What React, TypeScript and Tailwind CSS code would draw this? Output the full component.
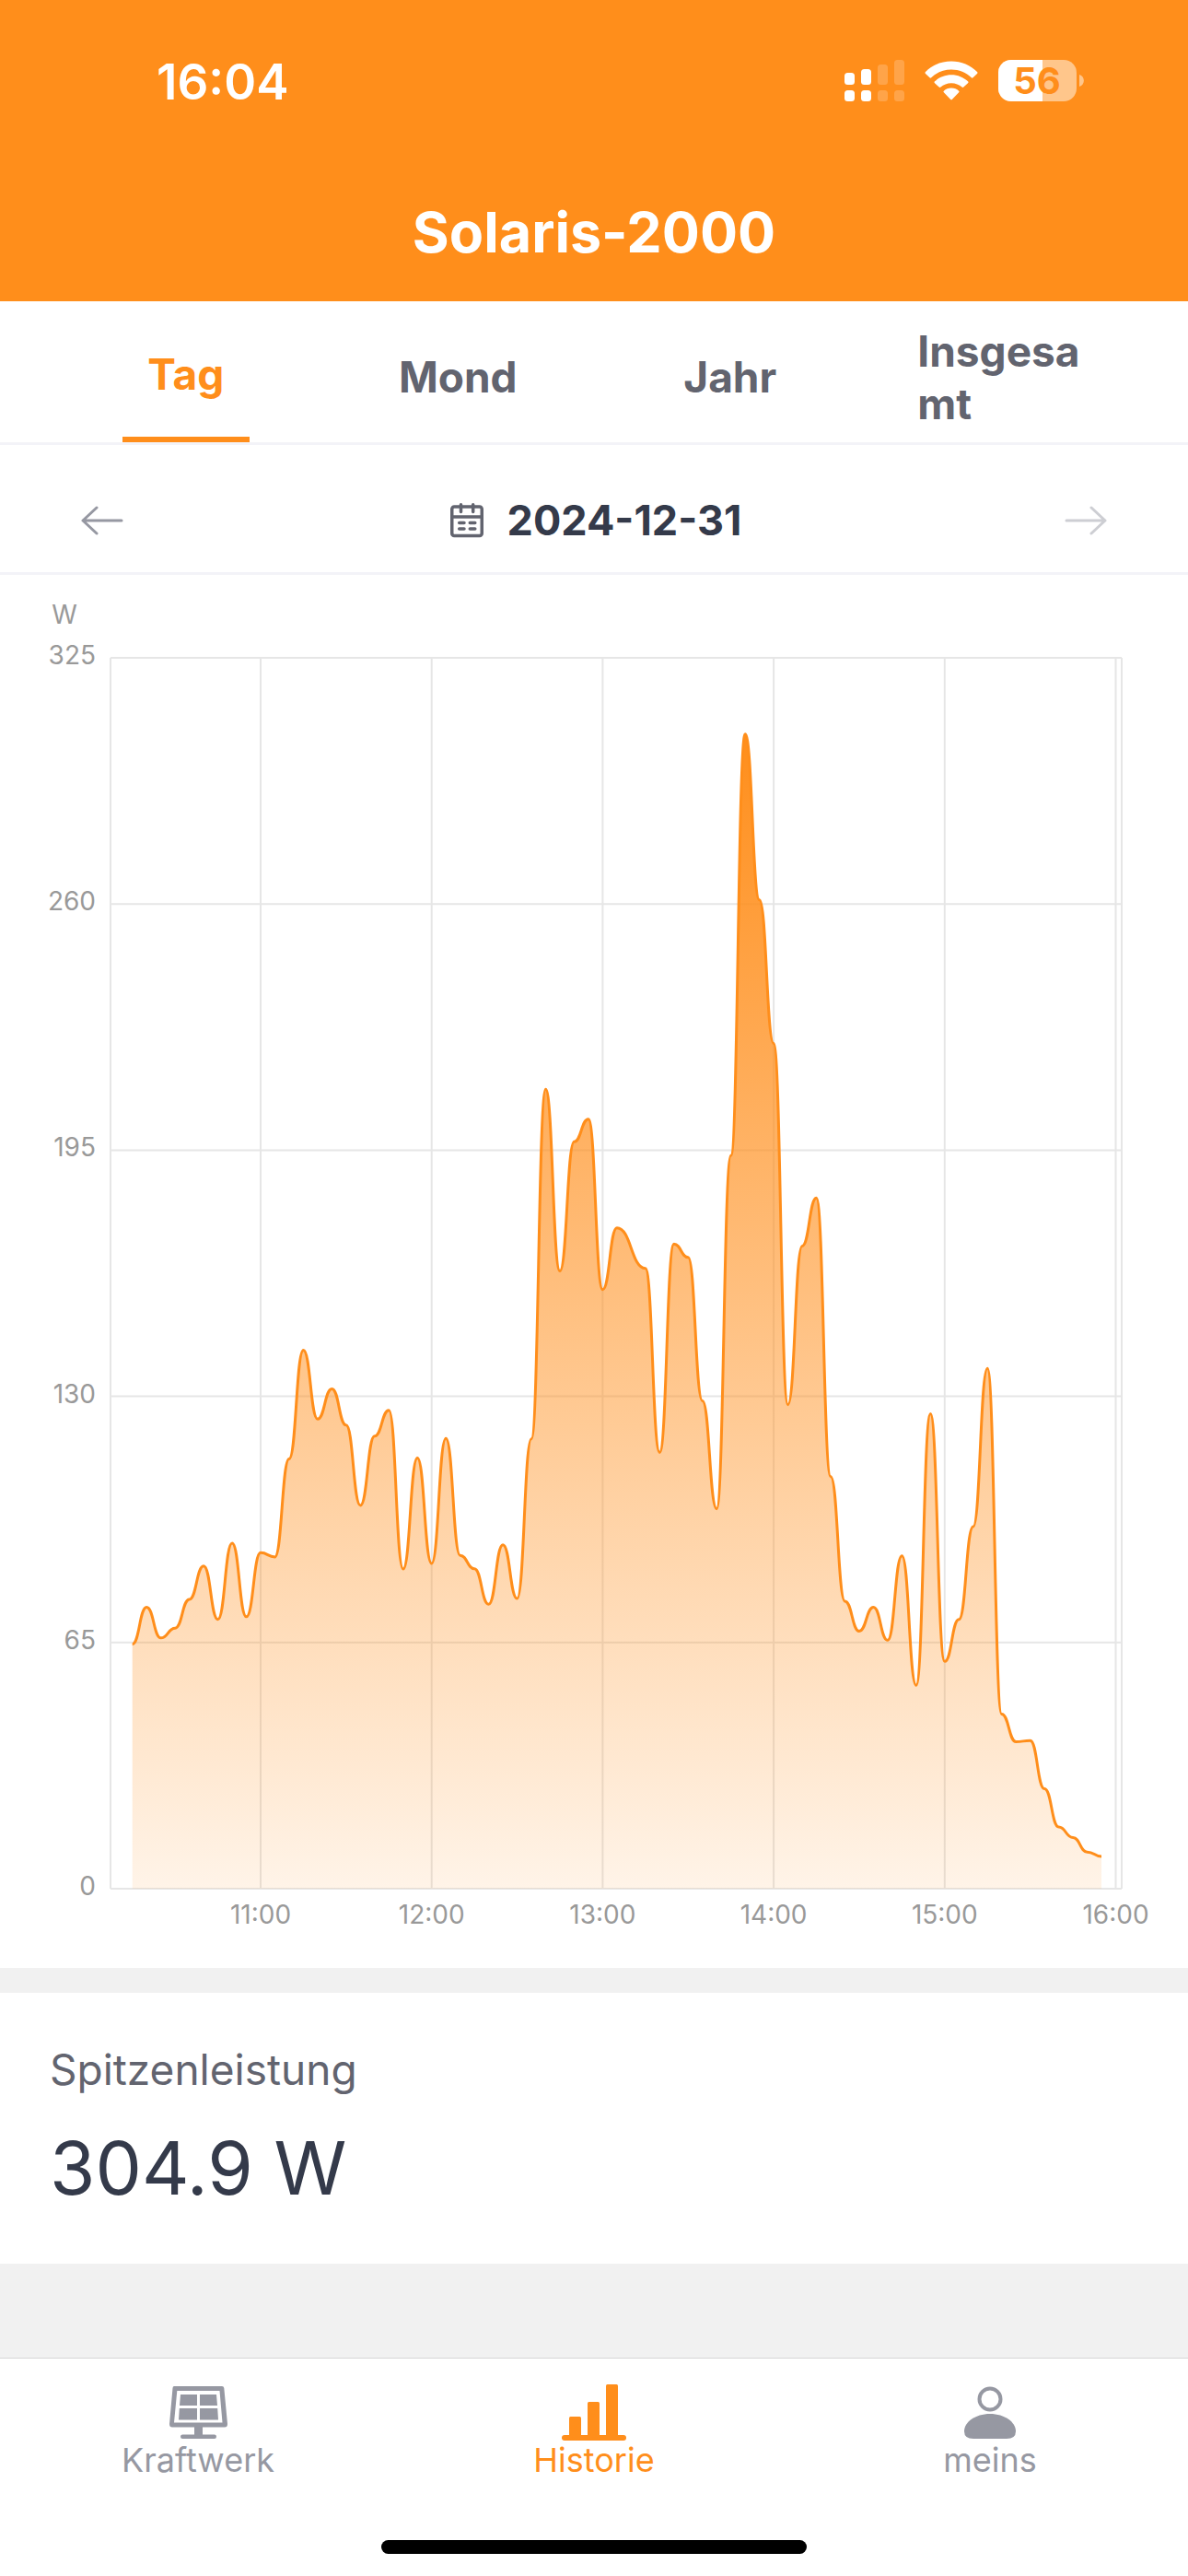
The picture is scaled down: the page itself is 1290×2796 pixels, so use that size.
import { useState } from 'react';

// Power readings in watts, [minutes since midnight, W]
const START = 10 * 60 + 15;
const readings: [number, number][] = [
  64.6, 74.3, 66.2, 68.8, 76.4, 85.2, 71.1, 91.2, 71.8, 88.7, 87.6, 113.5,
  142.2, 124, 132, 122.4, 101.2, 119.5, 126.3, 84.4, 113.7, 85.9, 118.9, 88,
  84.5, 75.1, 90.8, 76.6, 118.8, 211.1, 163.1, 197.2, 203.2, 158.2, 174.5, null,
  163.8, 115.2, 170.2, 166.7, 128.8, 100.3, 193.6, 304.9, 261.1, 223.2, 127.8, 169.7,
  182.4, 108.8, 75.9, 68, 74.3, 65.6, 87.9, 53.7, 125.4, 60, 71.1, 95.6,
  137.4, 46.1, 38.8, 39.1, 26.4, 16.3, 13.5, 9.7, 8.5,
].flatMap((w, i) => (w === null ? [] : [[START + i * 5, w] as [number, number]]));

const plot = { left: 120, right: 1218, top: 90, bottom: 1426 };
const MAX_W = 325;
const hours = [11, 12, 13, 14, 15, 16];
const watts = [0, 65, 130, 195, 260, 325];

const toX = (min: number) => 283 + ((min - 660) / 60) * 185.7;
const toY = (w: number) => plot.bottom - (w / MAX_W) * (plot.bottom - plot.top);

function linePath() {
  return readings
    .map(([min, w], i) => {
      const x = toX(min);
      const y = toY(w);
      if (i === 0) return `M${x} ${y}`;
      const px = toX(readings[i - 1][0]);
      const py = toY(readings[i - 1][1]);
      const mid = (px + x) / 2;
      return `C${mid} ${py} ${mid} ${y} ${x} ${y}`;
    })
    .join('');
}

function PowerChart() {
  const line = linePath();
  const firstX = toX(readings[0][0]);
  const lastX = toX(readings[readings.length - 1][0]);

  return (
    <svg viewBox="0 0 1290 1512" className="block w-full h-auto" role="img" aria-label="Leistung in Watt">
      <defs>
        <linearGradient id="area" x1="0" y1="0" x2="0" y2="1">
          <stop offset="0" stopColor="#ff8e1b" />
          <stop offset="1" stopColor="#ff8e1b" stopOpacity="0.1" />
        </linearGradient>
      </defs>
      <g stroke="#e6e6e6" strokeWidth="2">
        {watts.map(w => (
          <line key={w} x1={plot.left} x2={plot.right} y1={toY(w)} y2={toY(w)} />
        ))}
        {hours.map(h => (
          <line key={h} x1={toX(h * 60)} x2={toX(h * 60)} y1={plot.top} y2={plot.bottom} />
        ))}
        <line x1={plot.left} x2={plot.left} y1={plot.top} y2={plot.bottom} />
        <line x1={plot.right} x2={plot.right} y1={plot.top} y2={plot.bottom} />
      </g>
      <path d={`${line}L${lastX} ${plot.bottom}L${firstX} ${plot.bottom}Z`} fill="url(#area)" />
      <path d={line} fill="none" stroke="#ff8e1b" strokeWidth="3" strokeLinejoin="round" />
      <g className="text-[28px]" fill="#999999">
        <text x="70" y="53" textAnchor="middle">W</text>
        {watts.map(w => (
          <text key={w} x="104" y={toY(w) + 7} textAnchor="end">{w}</text>
        ))}
        {hours.map(h => (
          <text key={h} x={toX(h * 60)} y="1464" textAnchor="middle">{h}:00</text>
        ))}
      </g>
    </svg>
  );
}

function SignalIcon() {
  return (
    <svg width="65" height="45" viewBox="0 0 65 45" fill="white" aria-hidden="true">
      <rect x="0" y="14" width="11" height="13" rx="3.5" />
      <rect x="18" y="10" width="11" height="17" rx="3.5" />
      <rect x="0" y="33" width="11" height="12" rx="3.5" />
      <rect x="18" y="33" width="11" height="12" rx="3.5" />
      <g opacity="0.2">
        <rect x="36" y="5" width="11" height="22" rx="3.5" />
        <rect x="54" y="0" width="11" height="27" rx="3.5" />
        <rect x="36" y="33" width="11" height="12" rx="3.5" />
        <rect x="54" y="33" width="11" height="12" rx="3.5" />
      </g>
    </svg>
  );
}

function WifiIcon() {
  return (
    <svg width="58" height="43" viewBox="0 0 58 43" fill="white" aria-hidden="true">
      <path d="M29 0.5C40 0.5 50 4.800 57 12Q58 13 57 14L52.500 18.300Q51.700 19 50.800 18.200C45 12.700 37.500 9.500 29 9.500S13 12.700 7.200 18.200Q6.300 19 5.500 18.300L1 14Q0 13 1 12C8 4.800 18 0.500 29 0.500Z" />
      <path d="M29 15.200C36 15.200 42.300 17.900 47 22.300Q48 23.200 47 24.200L42.300 28.600Q41.500 29.300 40.600 28.600C37.500 25.800 33.500 24.200 29 24.200S20.500 25.800 17.400 28.600Q16.500 29.300 15.700 28.600L11 24.200Q10 23.200 11 22.300C15.700 17.900 22 15.200 29 15.200Z" />
      <path d="M29 29.500C32.200 29.500 35 30.700 37.200 32.700Q38 33.500 37.200 34.300L30 41.700Q29 42.700 28 41.700L20.800 34.300Q20 33.500 20.800 32.700C23 30.700 25.800 29.500 29 29.500Z" />
    </svg>
  );
}

function BatteryIcon() {
  return (
    <svg width="93" height="45" viewBox="0 0 93 45" className="overflow-visible" role="img" aria-label="Akku 56 %">
      <defs>
        <clipPath id="battery-body">
          <rect width="85" height="45" rx="14" />
        </clipPath>
      </defs>
      <g clipPath="url(#battery-body)">
        <rect width="85" height="45" fill="#ffc68b" />
        <rect width="48" height="45" fill="white" />
      </g>
      <path d="M88 16C94.500 17.500 94.500 27.500 88 29Z" fill="#ffc68b" />
      <text x="42" y="37" textAnchor="middle" fill="#ff8e1b" className="text-[40px] font-bold">56</text>
    </svg>
  );
}

function ArrowIcon() {
  return (
    <svg width="46" height="32" viewBox="0 0 46 32" fill="none" stroke="currentColor" strokeWidth="3" strokeLinecap="round" strokeLinejoin="round" aria-hidden="true">
      <path d="M44 16H2M17 2L2 16L17 30" />
    </svg>
  );
}

function CalendarIcon() {
  return (
    <svg width="36" height="38" viewBox="0 0 36 38" fill="none" stroke="#62646f" strokeWidth="3.5" strokeLinecap="round" aria-hidden="true">
      <rect x="1.750" y="4" width="32.500" height="31.500" rx="2.500" />
      <path d="M2 15H34M11.500 1.800V9.500M24.700 1.800V9.500" />
      <path d="M9.700 21.500H15M21.300 21.500H26.800M9.700 28H15M21.300 28H26.800" />
    </svg>
  );
}

function PlantIcon() {
  return (
    <svg width="63" height="58" viewBox="0 0 63 58" fill="currentColor" aria-hidden="true">
      <path fillRule="evenodd" d="M5 0H57Q59 0 59.300 2L63 41Q63 44.500 60 44.500H3Q0 44.500 0 41L3.500 2Q3.700 0 5 0ZM8.300 5L5 39.500H57.500L54.500 5Z" />
      <path d="M12 9H30V21H11ZM33 9H51L52 21H33ZM10.800 24H30V36.500H10ZM33 24H52.200L53 36.500H33Z" />
      <rect x="27" y="43" width="9" height="11" />
      <rect x="12" y="52.500" width="39" height="4.500" rx="2.250" />
    </svg>
  );
}

function HistoryIcon() {
  return (
    <svg width="70" height="62" viewBox="0 0 70 62" fill="currentColor" aria-hidden="true">
      <rect x="8" y="35" width="13" height="23" rx="1.500" />
      <rect x="28" y="19" width="13" height="39" rx="1.500" />
      <rect x="48" y="0" width="13" height="58" rx="1.500" />
      <rect x="0" y="55" width="70" height="6" rx="3" />
    </svg>
  );
}

function PersonIcon() {
  return (
    <svg width="58" height="58" viewBox="0 0 58 58" fill="currentColor" aria-hidden="true">
      <circle cx="29" cy="14" r="11.500" fill="none" stroke="currentColor" strokeWidth="4" />
      <path d="M29 30C45 30 57 39 57 49Q57 57 47 57H11Q1 57 1 49C1 39 13 30 29 30Z" />
    </svg>
  );
}

const tabs = ['Tag', 'Mond', 'Jahr', 'Insgesamt'];

const navItems = [
  { label: 'Kraftwerk', Icon: PlantIcon },
  { label: 'Historie', Icon: HistoryIcon },
  { label: 'meins', Icon: PersonIcon },
];

export default function App() {
  const [tab, setTab] = useState('Tag');

  return (
    <div className="min-h-screen flex flex-col bg-[#f1f1f1] font-['Inter','Liberation_Sans',sans-serif]">
      <header className="bg-[#ff8e1b] text-white">
        <div className="flex items-center justify-between pl-[170px] pr-[113px] pt-14 h-[118px]">
          <span className="pt-1 text-[53px] leading-[60px] font-semibold">16:04</span>
          <div className="flex items-center gap-[22px]">
            <SignalIcon />
            <WifiIcon />
            <BatteryIcon />
          </div>
        </div>
        <h1 className="pt-[94px] pb-[34px] text-center text-[61px] leading-[81px] font-bold">Solaris-2000</h1>
      </header>

      <main className="flex-1">
        <div role="tablist" className="grid grid-cols-4 h-[156px] px-[54px] bg-white border-b-[3px] border-[#f3f3f8]">
          {tabs.map(t => (
            <button
              key={t}
              role="tab"
              aria-selected={t === tab}
              onClick={() => setTab(t)}
              className={`flex flex-col items-center pt-3 text-[46px] leading-[57px] font-bold ${t === tab ? 'text-[#ff8e1b]' : 'text-[#62646f]'}`}
            >
              <span className="flex-1 flex items-center max-w-[184px] text-left break-all">{t}</span>
              {t === tab && <span className="w-[138px] h-1.5 bg-[#ff8e1b]" />}
            </button>
          ))}
        </div>

        <div className="flex items-center justify-between h-[141px] px-[88px] pt-[26px] bg-white border-b-[3px] border-[#f3f3f8]">
          <button aria-label="Vorheriger Tag" className="text-[#9698a2]">
            <ArrowIcon />
          </button>
          <button className="flex items-center gap-[26px] pl-1 text-[45px] leading-[54px] font-bold text-[#343a4a]">
            <CalendarIcon />
            2024-12-31
          </button>
          <button aria-label="Nächster Tag" disabled className="rotate-180 text-[#cdced3]">
            <ArrowIcon />
          </button>
        </div>

        <section className="bg-white">
          <PowerChart />
        </section>

        <section className="mt-[27px] px-[54px] pt-[53px] pb-[54px] bg-white">
          <h2 className="text-[46px] leading-[60px] text-[#62646f]">Spitzenleistung</h2>
          <p className="mt-[27px] text-[80px] leading-[100px] text-[#343a4a]">304.9 W</p>
        </section>
      </main>

      <footer className="bg-white border-t border-[#d6d6d6]">
        <nav className="grid grid-cols-3 pt-7">
          {navItems.map(({ label, Icon }) => (
            <a
              key={label}
              href="#"
              className={`flex flex-col items-center text-[36px] leading-[40px] ${label === 'Historie' ? 'text-[#ff8e1b]' : 'text-[#9698a2]'}`}
            >
              <span className="flex items-center h-[62px]">
                <Icon />
              </span>
              {label}
            </a>
          ))}
        </nav>
        <div className="mx-auto mt-[67px] mb-6 w-[462px] h-[15px] rounded-full bg-black" />
      </footer>
    </div>
  );
}
